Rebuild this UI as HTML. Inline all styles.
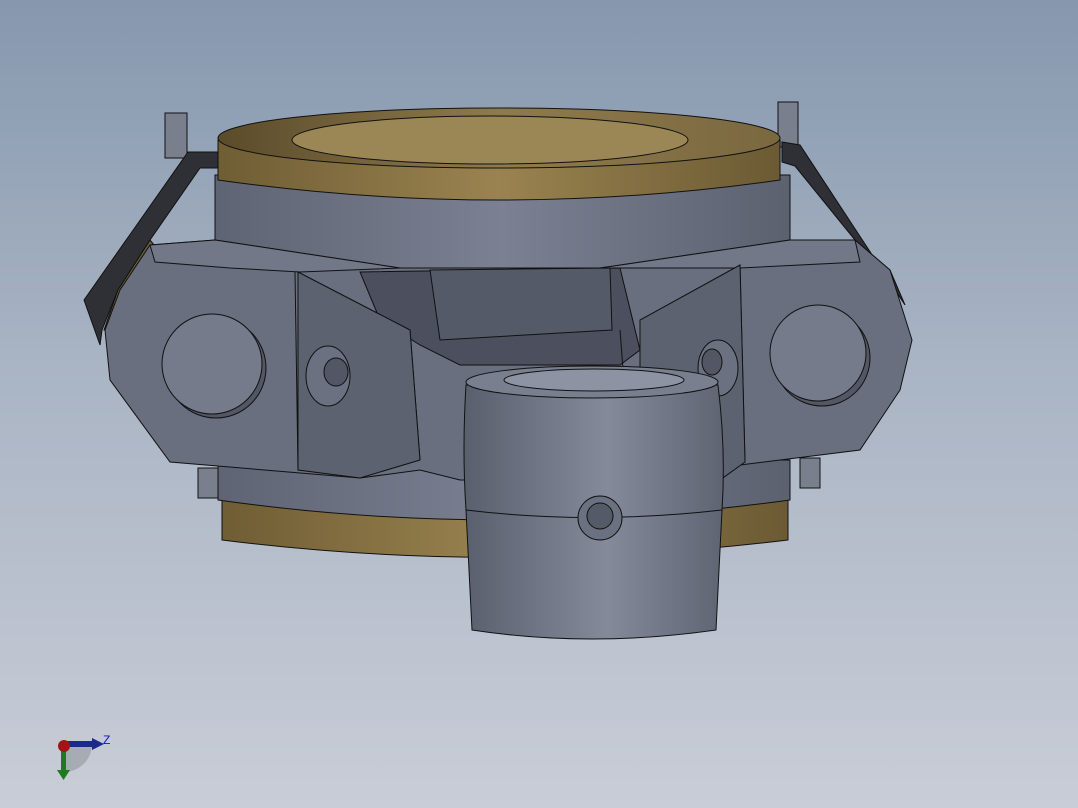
<!DOCTYPE html>
<html><head><style>
html,body{margin:0;padding:0;width:1078px;height:808px;overflow:hidden}
body{background:linear-gradient(#8698ae,#a9b4c4 45%,#c9cdd7)}
svg{position:absolute;left:0;top:0}
</style></head><body>
<svg width="1078" height="808" viewBox="0 0 1078 808" stroke="#111" stroke-width="1">
<defs>
<linearGradient id="gd" x1="0" x2="1"><stop offset="0" stop-color="#6f5d34"/><stop offset=".5" stop-color="#9a8350"/><stop offset="1" stop-color="#6b5a33"/></linearGradient>
<linearGradient id="gt" x1="0" x2="1"><stop offset="0" stop-color="#5a4b2a"/><stop offset=".5" stop-color="#8f7a4c"/><stop offset="1" stop-color="#7a6840"/></linearGradient>
<linearGradient id="gy" x1="0" x2="1"><stop offset="0" stop-color="#5f6474"/><stop offset=".5" stop-color="#7b8092"/><stop offset="1" stop-color="#5c6170"/></linearGradient>
<linearGradient id="cy" x1="0" x2="1"><stop offset="0" stop-color="#5a5f6e"/><stop offset=".55" stop-color="#858a9b"/><stop offset="1" stop-color="#5f6473"/></linearGradient>
</defs>
<rect x="165" y="113" width="22" height="45" fill="#7a7f8e"/>
<rect x="778" y="102" width="20" height="45" fill="#7a7f8e"/>
<!-- side dark belts (thinner, following body) -->
<path d="M84 300 L188 152 L222 152 L222 168 L200 168 L150 240 L118 290 L102 330 L100 345 Z" fill="#2e3035"/>
<path d="M150 240 L118 290 L104 330 L110 330 L122 292 L155 246 Z" fill="#6b5a33"/>
<path d="M905 305 L800 145 L782 142 L782 162 L795 166 L855 240 L890 270 Z" fill="#2e3035"/>
<path d="M222 500 L222 540 Q500 575 788 540 L788 500 Z" fill="url(#gd)"/>
<path d="M218 460 L218 500 Q500 540 790 500 L790 460 Z" fill="url(#gy)"/>
<path d="M215 175 L215 255 Q500 290 790 255 L790 175 Z" fill="url(#gy)"/>
<path d="M150 245 L215 240 L400 268 L600 268 L790 240 L855 240 L890 270 L912 340 L900 390 L860 450 L740 465 L720 480 L460 480 L420 470 L360 478 L170 462 L110 380 L105 330 L120 290 Z" fill="#6a6f7f"/>
<path d="M150 245 L215 240 L400 268 L300 272 L230 268 L155 262 Z" fill="#737889"/>
<path d="M790 240 L855 240 L860 262 L740 268 L600 268 Z" fill="#737889"/>
<path d="M360 272 L620 268 L640 350 L620 365 L460 365 L420 345 L380 320 Z" fill="#4c505e"/>
<path d="M430 270 L610 268 L612 330 L440 340 Z" fill="#555a68"/>
<path d="M295 272 L298 470 M740 265 L745 462 M410 330 L420 460 M620 330 L630 460" fill="none"/>
<path d="M298 272 L410 330 L420 460 L360 478 L298 470 Z" fill="#5d6271"/>
<path d="M740 265 L640 320 L640 440 L720 480 L745 462 Z" fill="#5d6271"/>
<circle cx="216" cy="368" r="50" fill="#535765"/>
<circle cx="212" cy="364" r="50" fill="#767b8c"/>
<circle cx="822" cy="358" r="48" fill="#535765"/>
<circle cx="818" cy="353" r="48" fill="#767b8c"/>
<ellipse cx="328" cy="376" rx="22" ry="30" fill="#6c7181"/>
<ellipse cx="336" cy="372" rx="12" ry="14" fill="#535765"/>
<ellipse cx="718" cy="368" rx="20" ry="28" fill="#6c7181"/>
<ellipse cx="712" cy="362" rx="10" ry="13" fill="#535765"/>
<rect x="198" y="468" width="20" height="30" fill="#7a7f8e"/>
<rect x="800" y="458" width="20" height="30" fill="#7a7f8e"/>
<path d="M218 140 L218 180 Q500 220 780 180 L780 140 Z" fill="url(#gd)"/>
<ellipse cx="499" cy="138" rx="281" ry="30" fill="url(#gt)"/>
<ellipse cx="490" cy="140" rx="198" ry="24" fill="#9b8656"/>
<path d="M466 385 Q462 450 466 510 L472 630 Q590 648 716 630 L722 510 Q726 450 718 385 Z" fill="url(#cy)"/>
<path d="M466 510 Q590 525 722 510" fill="none"/>
<ellipse cx="592" cy="382" rx="126" ry="16" fill="#7a7f90"/>
<ellipse cx="594" cy="380" rx="90" ry="11" fill="#8e93a3"/>
<circle cx="600" cy="518" r="22" fill="#6c7181"/>
<circle cx="600" cy="516" r="13" fill="#555a68"/>
<g stroke="none">
<path d="M64 744 L92 744 A28 28 0 0 1 64 772 Z" fill="#9ea3ab" opacity=".8"/>
<rect x="63" y="741" width="30" height="6" fill="#1b2a8a"/>
<path d="M92 738 L104 744 L92 750 Z" fill="#1b2a8a"/>
<rect x="61" y="746" width="5" height="26" fill="#1e7a1e"/>
<path d="M57 770 L70 770 L63.5 780 Z" fill="#1e7a1e"/>
<circle cx="64" cy="746" r="6" fill="#a01515"/>
<text x="103" y="744" font-family="Liberation Sans,sans-serif" font-size="12" fill="#1010d0">Z</text>
</g>
</svg>
</body></html>
